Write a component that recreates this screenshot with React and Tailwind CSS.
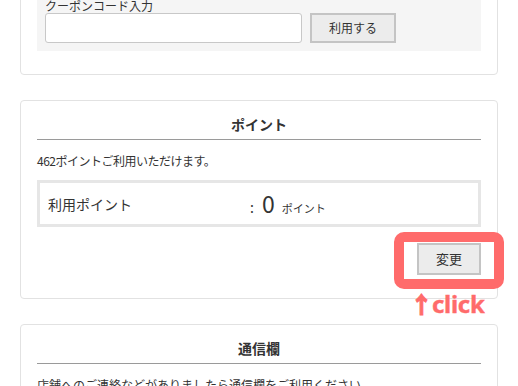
export default function App() {
  const font = { fontFamily: '"Noto Sans CJK JP", "Noto Sans", sans-serif' };
  return (
    <div className="w-[518px] h-[386px] overflow-hidden bg-white text-[#333]" style={font}>
      <div className="px-[20px] flex flex-col gap-[25px]">
        {/* coupon card */}
        <div className="mt-[-30px] border border-[#e2e2e2] rounded-[4px] px-[16px] pt-[21px] pb-[23px]">
          <div className="bg-[#f5f5f5] px-[8px] pt-[7px] pb-[8px]">
            <div className="text-[12px] leading-[14px]">クーポンコード入力</div>
            <div className="flex gap-[8px]">
              <div className="w-[257px] h-[30px] bg-white border border-[#c8c8c8] rounded-[3px]" />
              <button className="w-[86px] h-[30px] bg-[#ececec] border-2 border-[#c4c4c4] text-[12px] leading-[26px] text-[#333]">
                利用する
              </button>
            </div>
          </div>
        </div>

        {/* point card */}
        <div className="relative border border-[#e2e2e2] rounded-[4px] px-[16px] pt-[13px] pb-[23px]">
          <div className="text-center text-[14px] leading-[20px] font-bold pb-[5px] border-b border-[#9a9a9a]">
            ポイント
          </div>
          <div className="mt-[12px] text-[12px] leading-[18px] tracking-[-0.5px]">462ポイントご利用いただけます。</div>
          <div className="mt-[10px] h-[47px] border-[3px] border-[#e6e6e6] flex items-center pl-[8px]">
            <div className="w-[202px] text-[14px] leading-[20px]">利用ポイント</div>
            <div className="flex items-baseline">
              <span className="text-[14px]">:</span>
              <span className="ml-[8px] text-[23px] leading-[28px]">0</span>
              <span className="ml-[7px] text-[11px]">ポイント</span>
            </div>
          </div>
          <div className="mt-[16px] flex justify-end">
            <button className="w-[64px] h-[32px] bg-[#ececec] border-2 border-[#c4c4c4] text-[13px] text-[#333]">
              変更
            </button>
          </div>
          <div className="absolute left-[373px] top-[131px] w-[110px] h-[57px] border-[10px] border-[#ff6b6b] rounded-[10px]" />
          <div className="absolute left-[389px] top-[185px] flex items-baseline text-[#ff6b6b] font-bold whitespace-nowrap">
            <span
              className="text-[23px] leading-[34px] font-black [-webkit-text-stroke:0.9px_#ff6b6b]"
              style={{ fontFamily: '"Noto Sans CJK JP", sans-serif' }}
            >
              ↑
            </span>
            <span className="ml-[-1px] text-[24px] leading-[34px] tracking-[-0.3px] [-webkit-text-stroke:0.4px_#ff6b6b]" style={{ fontFamily: '"Noto Sans", sans-serif' }}>click</span>
          </div>
        </div>

        {/* message card */}
        <div className="border border-[#e2e2e2] rounded-[4px] px-[16px] pt-[13px] pb-[23px]">
          <div className="text-center text-[14px] leading-[20px] font-bold pb-[5px] border-b border-[#9a9a9a]">
            通信欄
          </div>
          <div className="mt-[12px] text-[12px] leading-[18px]">店舗へのご連絡などがありましたら通信欄をご利用ください。</div>
        </div>
      </div>
    </div>
  );
}
